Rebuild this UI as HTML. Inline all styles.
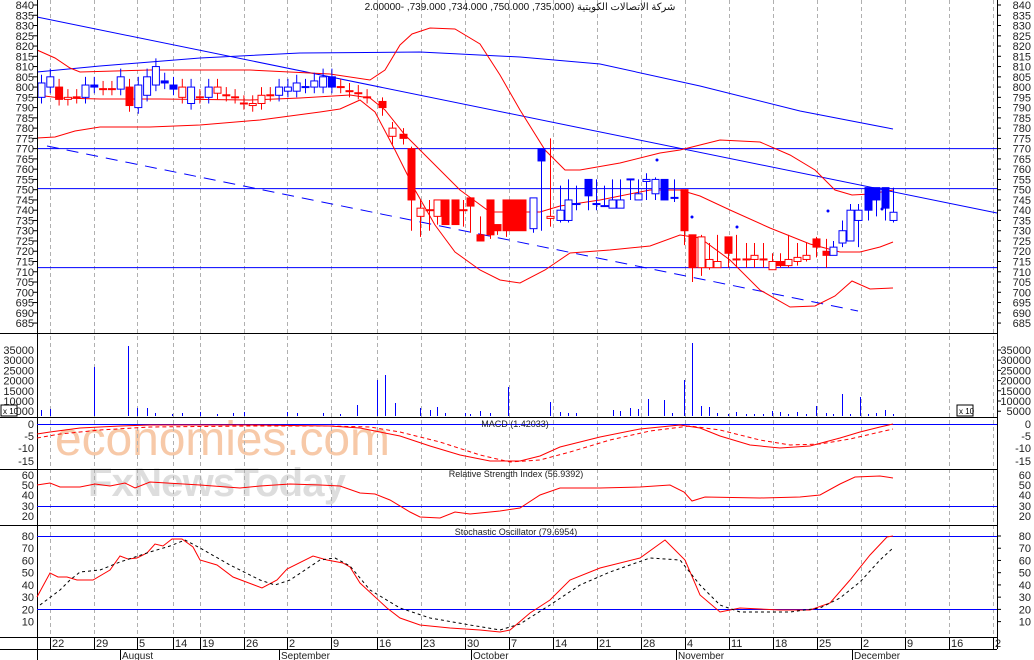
<!DOCTYPE html>
<html><head><meta charset="utf-8"><style>
html,body{margin:0;padding:0;background:#fff;overflow:hidden;}
svg{display:block;font-family:"Liberation Sans","Noto Sans CJK SC",sans-serif;}
</style></head><body>
<svg id="s" width="1034" height="660" viewBox="0 0 1034 660" xmlns="http://www.w3.org/2000/svg">
<rect width="1034" height="660" fill="#fff"/>
<text x="55" y="455" font-size="48" fill="#f7c9a8" textLength="335">economies.com</text>
<text x="88" y="496" font-size="40" fill="#dddddd" font-weight="bold" textLength="258">FxNewsToday</text>
<g id="g"></g>
<text x="520" y="10" font-size="10" fill="#111" text-anchor="middle" direction="rtl">شركة الاتصالات الكويتية (735.000, 750.000, 734.000, 739.000, -2.00000</text>
</svg>
<script>
var g=document.getElementById('g'),h='';
function L(x1,y1,x2,y2,c,w,d){h+='<line x1="'+x1+'" y1="'+y1+'" x2="'+x2+'" y2="'+y2+'" stroke="'+c+'" stroke-width="'+(w||1)+'"'+(d?' stroke-dasharray="'+d+'"':'')+'/>';}
function P(pts,c,d){h+='<polyline fill="none" stroke="'+c+'" stroke-width="1" points="'+pts.map(function(p){return p.join(',')}).join(' ')+'"'+(d?' stroke-dasharray="'+d+'"':'')+'/>';}
function T(x,y,t,a,s){h+='<text x="'+x+'" y="'+y+'" font-size="'+(s||11)+'" fill="#222" text-anchor="'+(a||'start')+'">'+t+'</text>';}
function Y(p){return 5+(840-p)*2.052;}
var gx=[50,94,137,173,200,244,287,331,377,421,465,509,553,597,641,685,729,773,817,861,905,949,993];
gx.forEach(function(x){L(x+.5,0,x+.5,637,'#b0b0b0',1,'4,3');});
for(var p=840;p>=685;p-=5){var y=Y(p);T(34,y+4,p,'end');T(1031,y+4,p,'end');L(33,y,37,y,'#000');L(997,y,1001,y,'#000');}
[Y(770),Y(750.5),Y(712)].forEach(function(y){L(37,y,997,y,'#0000ff');});
L(37,17,997,213,'#0000ff');L(47,146,858,311,'#0000ff',1,'12,8');
P([[37,72],[100,66],[200,58],[300,53],[420,52],[520,57],[600,64],[700,86],[800,111],[893,129]],'#0000ff');
P([[37,50],[55,58],[70,68],[80,72],[150,70],[250,70],[330,74],[370,80],[385,70],[400,45],[412,34],[430,28],[455,29],[480,44],[500,75],[520,110],[545,150],[565,170],[580,170],[620,163],[660,153],[680,150],[700,145],[720,140],[760,142],[790,155],[815,170],[835,190],[852,195],[870,194],[893,190]],'#ff0000');
P([[37,138],[55,137],[75,131],[100,127],[150,127],[200,125],[260,120],[320,112],[340,109],[360,100],[375,112],[395,150],[415,190],[435,225],[455,252],[480,270],[500,280],[520,283],[545,270],[570,253],[610,250],[650,246],[680,235],[700,238],[730,260],[760,290],[790,307],[815,306],[835,296],[852,281],[870,289],[893,288]],'#ff0000');
P([[37,95],[60,98],[100,99],[160,99],[250,100],[300,98],[350,95],[370,98],[385,110],[405,135],[430,160],[460,190],[490,212],[520,212],[540,212],[560,206],[600,200],[650,190],[680,190],[700,196],[730,210],[770,228],[810,244],[840,252],[860,252],[880,247],[893,242]],'#ff0000');
var c1=[[795,802],[800,805],[800,794],[795,794],[795,795],[795,801],[801,800],[799,799],[799,799],[799,805],[800,791],[790,801],[796,805],[801,810],[802,803],[801,799],[800,795],[800,792],[795,795],[795,800],[800,797],[796,796],[795,795],[792,792],[791,792],[792,796],[796,796],[796,800],[798,800],[798,802],[800,800],[800,803],[800,805],[800,805],[800,800],[798,798],[797,797],[795,795]];
var ty1='bbRrrbBrrbRbbbBBrbrbrrrrrrrbbbbbbBrrrr';
var C=[];c1.forEach(function(v,i){var hi=Math.max(v[0],v[1])+4,lo=Math.min(v[0],v[1])-3;C.push([41+i*8.8,v[0],v[1],hi,lo,ty1[i]]);});
C=C.concat([[382,793,790,795,786,'R'],[392,780,776,783,772,'r'],[403,777,775,780,772,'R'],
[411,770,745,771,730,'R'],[420,741,737,745,727,'r'],[429,740,740,745,730,'r'],[437,745,737,745,733,'r'],[445,745,733,745,733,'R'],[455,745,733,745,733,'R'],[463,740,740,745,732,'r'],[470,746,742,746,729,'R'],[480,728,725,737,725,'R'],[490,745,728,745,726,'R'],[497,733,730,733,728,'R'],[506,745,730,745,727,'R'],[514,745,730,745,730,'R'],[522,745,730,745,733,'R'],[533,746,731,746,729,'b'],[541,770,764,770,730,'B'],[550,736,737,775,732,'r'],[560,740,735,752,734,'b'],[568,735,745,755,734,'b'],[576,743,743,752,740,'b'],[588,755,747,755,740,'B'],[596,743,743,755,740,'b'],[604,742,742,752,742,'b'],[612,741,745,755,741,'b'],[620,741,745,755,741,'b'],[630,755,755,755,745,'b'],[638,745,748,755,745,'b'],[646,755,754,758,745,'b'],[655,748,755,756,745,'b'],[664,755,745,755,745,'B'],[674,746,746,755,744,'b'],
[684,750,730,750,723,'R'],[692,728,712,728,705,'R'],[701,727,712,728,708,'r'],[709,716,712,724,711,'r'],[717,715,712,728,712,'r'],[728,727,719,727,712,'R'],[736,716,716,728,712,'r'],[746,716,716,724,712,'r'],[754,718,716,724,712,'r'],[763,716,716,724,712,'r'],[772,715,711,719,711,'r'],[780,715,713,719,712,'R'],[788,716,713,728,712,'r'],[797,717,715,724,713,'r'],[806,718,716,724,715,'r'],[816,726,722,727,717,'R'],[826,720,718,726,712,'R'],[833,718,722,725,718,'b'],[842,724,730,735,722,'b'],[850,725,740,743,725,'b'],[858,735,740,743,722,'b'],[868,751,740,751,735,'B'],[876,751,745,751,737,'B'],[885,751,741,751,735,'B'],[893,739,735,751,734,'b']]);
C.forEach(function(v){var x=v[0],col=(v[5]=='R'||v[5]=='r')?'#ff0000':'#0000ff',fill=(v[5]=='R'||v[5]=='B');
 var t=Y(Math.max(v[1],v[2])),b=Y(Math.min(v[1],v[2]));
 L(x+.5,Y(v[3]),x+.5,Y(v[4]),col);
 if(b-t<1.5){L(x-3.5,t,x+4.5,t,col,2);}
 else h+='<rect x="'+(x-3)+'" y="'+t+'" width="7" height="'+(b-t)+'" fill="'+(fill?col:'#fff')+'" stroke="'+col+'"/>';});
[[692,217],[737,227],[828,211],[657,160],[882,209]].forEach(function(d){h+='<circle cx="'+d[0]+'" cy="'+d[1]+'" r="1.5" fill="#0000ff"/>';});
[333,417,469,525,637,649].forEach(function(y){L(0,y+.5,997,y+.5,'#000');});
L(37.5,0,37.5,660,'#000');L(997.5,0,997.5,649,'#000');
[35000,30000,25000,20000,15000,10000,5000].forEach(function(v,i){var y=350+i*10.2;T(34,y+4,v,'end');T(1031,y+4,v,'end');L(997,y,1001,y,'#000');});
h+='<rect x="1" y="405" width="16" height="11" fill="#fff" stroke="#000"/><text x="3" y="414" font-size="8">x 10</text>';
h+='<rect x="957" y="405" width="16" height="11" fill="#fff" stroke="#000"/><text x="959" y="414" font-size="8">x 10</text>';
var vb={41:6,50:7,94:49,128:70,137:8,147:8,155:3,172:2,182:3,200:4,217:2,233:3,244:4,287:4,297:3,323:3,340:2,357:11,377:36,385:41,395:13,420:8,430:6,437:9,445:3,465:3,470:2,480:5,490:3,508:29,550:14,560:4,568:3,576:3,613:6,620:5,630:8,638:7,648:17,664:16,672:3,684:36,692:73,701:10,709:9,717:3,728:2,736:4,746:2,754:2,763:2,772:5,780:4,788:2,797:4,806:2,816:10,826:3,833:2,842:22,850:2,860:19,868:2,876:3,885:6,893:2};
for(var k in vb){L(+k+.5,416-vb[k],+k+.5,416,'#0000ff');}
[[0,424],[-5,436],[-10,448],[-15,461]].forEach(function(v){T(1031,v[1]+4,v[0],'end');T(34,v[1]+4,v[0],'end');});
L(37,424.5,997,424.5,'#0000ff');
P([[37,434],[50,432],[80,428],[120,426],[150,425],[250,425],[330,426],[360,428],[380,432],[400,436],[430,446],[460,455],[490,461],[520,461],[540,456],[560,447],[600,437],[640,429],[680,425],[700,428],[720,436],[750,445],[780,448],[810,446],[840,438],[860,432],[880,427],[893,424]],'#ff0000');
P([[37,438],[60,434],[100,430],[150,427],[250,426],[330,426],[370,427],[400,432],[440,442],[480,455],[510,462],[540,460],[570,452],[610,440],[650,431],[690,426],[720,430],[760,440],[790,445],[820,444],[850,439],[880,432],[893,429]],'#ff0000','4,3');
T(515,427,'MACD (1.42033)','middle',9);
[[60,475],[50,485],[40,495],[30,506],[20,516]].forEach(function(v){T(1031,v[1]+4,v[0],'end');T(34,v[1]+4,v[0],'end');});
L(37,506.5,997,506.5,'#0000ff');
P([[37,485],[50,483],[60,487],[80,487],[95,484],[110,486],[125,483],[135,488],[150,482],[200,485],[240,488],[260,486],[290,484],[320,485],[340,486],[360,493],[375,494],[390,500],[410,512],[420,517],[440,518],[455,512],[470,514],[500,511],[520,508],[540,495],[560,488],[600,488],[640,487],[670,485],[684,492],[692,501],[705,497],[760,498],[800,497],[820,495],[840,484],[855,477],[880,476],[893,478]],'#ff0000');
T(516,477,'Relative Strength Index (56.9392)','middle',9);
[80,70,60,50,40,30,20,10].forEach(function(v){var y=536+(80-v)*1.223;T(1031,y+4,v,'end');T(34,y+4,v,'end');L(997,y,1001,y,'#000');});
L(37,536.5,997,536.5,'#0000ff');L(37,609.5,997,609.5,'#0000ff');
P([[37,597],[50,573],[58,577],[67,577],[77,580],[93,580],[110,570],[120,556],[128,559],[137,558],[147,553],[155,544],[163,546],[172,539],[182,539],[193,547],[200,560],[217,565],[233,577],[262,588],[277,580],[287,569],[313,556],[327,560],[343,563],[350,567],[360,583],[387,608],[400,618],[420,625],[450,628],[480,630],[500,632],[510,630],[530,613],[550,600],[570,580],[600,568],[640,558],[665,540],[685,560],[700,595],[720,612],[740,608],[780,610],[810,610],[830,603],[850,580],[870,555],[887,537],[893,536]],'#ff0000');
P([[40,605],[60,590],[70,580],[80,572],[100,570],[120,562],[150,552],[170,546],[185,540],[200,548],[230,565],[260,580],[275,585],[290,580],[320,560],[335,558],[350,566],[370,590],[400,608],[430,618],[470,625],[500,630],[520,624],[550,605],[580,585],[610,572],[650,558],[680,560],[700,585],[720,605],[740,612],[790,612],[820,608],[840,598],[860,582],[880,560],[893,548]],'#000','3,3');
T(516,535,'Stochastic Oscillator (79.6954)','middle',9);
var dl=['22','29','5','14','19','26','2','9','16','23','30','7','14','21','28','4','11','18','25','2','9','16','2'];
gx.forEach(function(x,i){L(x+.5,637,x+.5,649,'#000');T(x+2,647,dl[i],'start',11);});
[[120,'August'],[279,'September'],[471,'October'],[676,'November'],[852,'December']].forEach(function(m){L(m[0]+.5,649,m[0]+.5,660,'#000');T(m[0]+2,659,m[1],'start',10);});
g.innerHTML=h;
</script>
</body></html>
